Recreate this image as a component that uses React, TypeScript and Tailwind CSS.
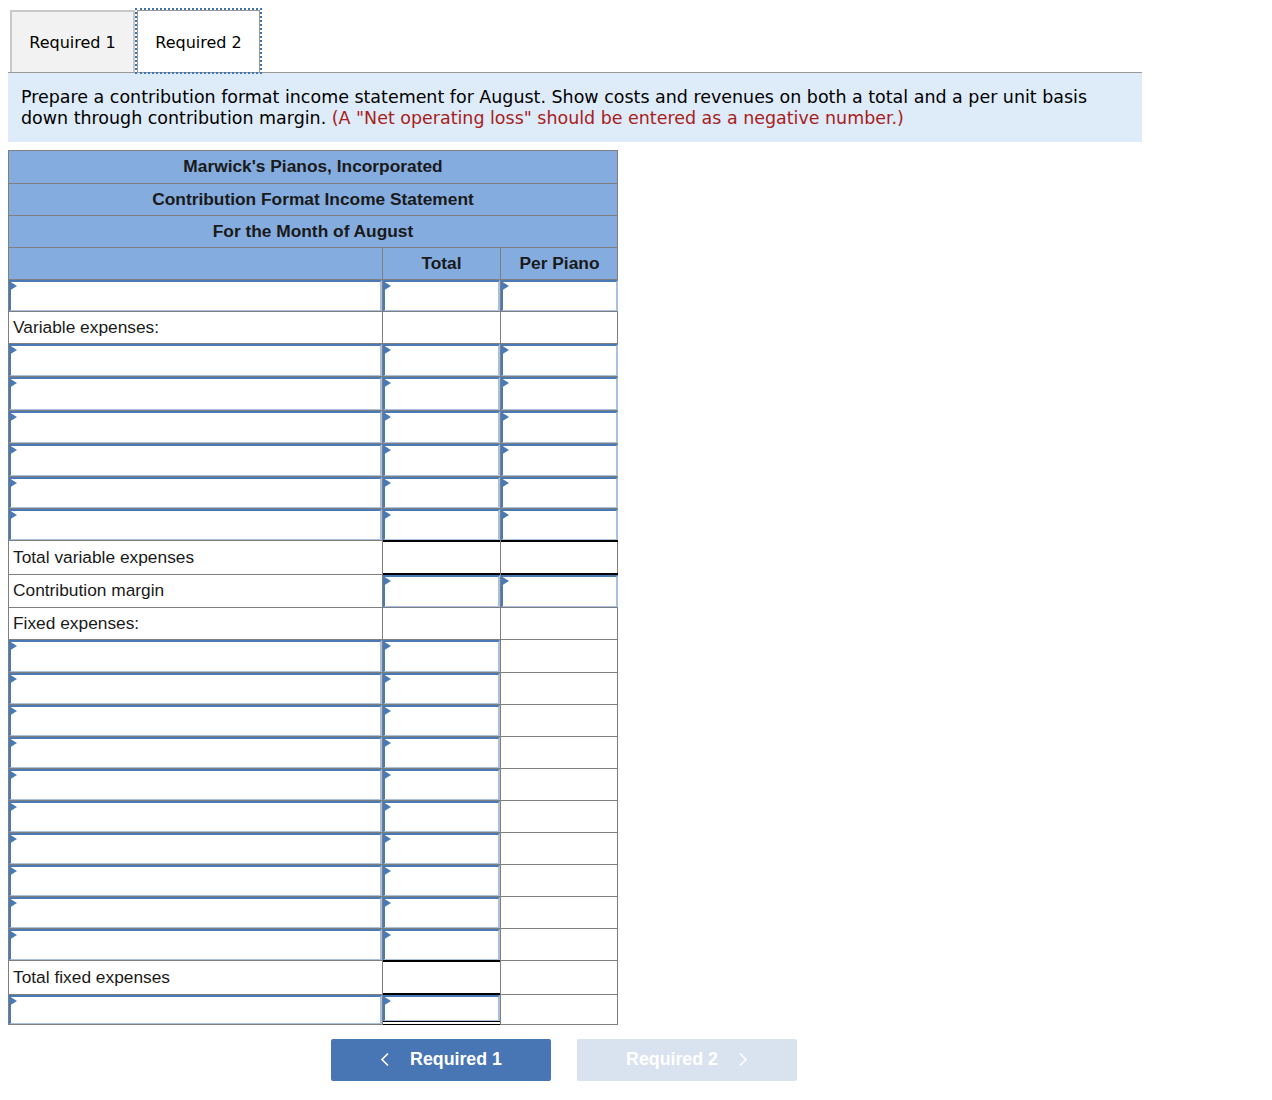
type CellKind = 'blank' | 'input' | 'sum' | 'double';

interface Row {
  height: number;
  label?: string;
  labelInput?: boolean;
  total: CellKind;
  perUnit: CellKind;
}

const inputRow = (height: number, perUnit: CellKind = 'input'): Row => ({
  height,
  labelInput: true,
  total: 'input',
  perUnit,
});

const rows: Row[] = [
  inputRow(32),
  { height: 32, label: 'Variable expenses:', total: 'blank', perUnit: 'blank' },
  inputRow(33),
  inputRow(34),
  inputRow(33),
  inputRow(33),
  inputRow(32),
  inputRow(32),
  { height: 34, label: 'Total variable expenses', total: 'sum', perUnit: 'sum' },
  { height: 33, label: 'Contribution margin', total: 'input', perUnit: 'input' },
  { height: 32, label: 'Fixed expenses:', total: 'blank', perUnit: 'blank' },
  inputRow(33, 'blank'),
  inputRow(32, 'blank'),
  inputRow(32, 'blank'),
  inputRow(32, 'blank'),
  inputRow(32, 'blank'),
  inputRow(32, 'blank'),
  inputRow(32, 'blank'),
  inputRow(32, 'blank'),
  inputRow(32, 'blank'),
  inputRow(32, 'blank'),
  { height: 34, label: 'Total fixed expenses', total: 'sum', perUnit: 'blank' },
  { height: 30, labelInput: true, total: 'double', perUnit: 'blank' },
];

function InputCell() {
  return (
    <div className="relative h-full w-full border-2 border-b border-[#4a7ab5] border-r-[#a9c0de] border-b-[#a9c0de] bg-white">
      <span className="absolute -left-[2px] -top-px h-0 w-0 border-y-[5px] border-l-[8px] border-y-transparent border-l-[#4a7ab5]" />
    </div>
  );
}

function Cell({ kind }: { kind: CellKind }) {
  if (kind === 'blank') return <div className="h-full" />;
  if (kind === 'sum') return <div className="relative z-10 -my-px h-[calc(100%+2px)] border-y-2 border-black" />;
  if (kind === 'double') {
    return (
      <div className="relative z-10 -mb-px flex h-[calc(100%+1px)] flex-col border-b border-black">
        <div className="flex-1">
          <InputCell />
        </div>
        <div className="h-[3px] border-t border-black" />
      </div>
    );
  }
  return <InputCell />;
}

function StatementRow({ row }: { row: Row }) {
  return (
    <div
      className="grid grid-cols-[374px_118px_117px] border-b border-[#7f7f7f]"
      style={{ height: row.height }}
    >
      <div className="border-r border-[#7f7f7f] text-[17.33px] text-[#1a1a1a]">
        {row.labelInput ? <InputCell /> : <div className="flex h-full items-center pl-1">{row.label}</div>}
      </div>
      <div className="border-r border-[#7f7f7f]">
        <Cell kind={row.total} />
      </div>
      <div>
        <Cell kind={row.perUnit} />
      </div>
    </div>
  );
}

export default function App() {
  return (
    <div className="min-h-[1100px] bg-white pl-2 pt-[9px] font-['Liberation_Sans',Arial,sans-serif]">
      <div className="w-[1134px] font-['DejaVu_Sans',Verdana,sans-serif]">
        <div className="flex h-[64px] items-end border-b border-[#999999] pl-[2px] text-[16px] text-black">
          <div className="flex h-[62px] w-[125px] items-center justify-center border-2 border-b-0 border-[#c8c8c8] bg-[#f2f2f2] pt-[2px]">
            Required 1
          </div>
          <div className="relative z-10 ml-[2px] flex h-[62px] w-[123px] items-center justify-center border border-b-0 border-[#9a9a9a] bg-white pt-[2px] outline-2 outline-dotted outline-[#3f73b4]">
            Required 2
          </div>
        </div>
        <div className="h-[69px] bg-[#deebf9] px-[13px] pt-[14px] text-[17.47px] leading-[21px] text-black">
          Prepare a contribution format income statement for August. Show costs and revenues on both a total and a per
          unit basis
          <br />
          down through contribution margin.{' '}
          <span className="text-[#a8201a]">(A "Net operating loss" should be entered as a negative number.)</span>
        </div>
      </div>

      <div className="mt-2 w-[610px] border border-b-0 border-[#7f7f7f]">
        <div className="bg-[#84acdf] text-center text-[17.33px] font-bold leading-[31px] text-[#1a1a1a]">
          <div className="h-[33px] border-b border-[#7f7f7f]">Marwick's Pianos, Incorporated</div>
          <div className="h-[32px] border-b border-[#7f7f7f]">Contribution Format Income Statement</div>
          <div className="h-[32px] border-b border-[#7f7f7f]">For the Month of August</div>
          <div className="grid h-[32px] grid-cols-[374px_118px_117px] border-b border-[#7f7f7f]">
            <div className="border-r border-[#7f7f7f]" />
            <div className="border-r border-[#7f7f7f]">Total</div>
            <div>Per Piano</div>
          </div>
        </div>
        {rows.map((row, i) => (
          <StatementRow key={i} row={row} />
        ))}
      </div>

      <div className="mt-[14px] flex w-[1112px] justify-center gap-[26px] text-[17.8px] font-bold text-white">
        <button className="flex h-[42px] w-[220px] items-center justify-center gap-[21px] rounded-[2px] bg-[#4876b4] pb-[2px]">
          <svg width="9" height="15" viewBox="0 0 9 15" fill="none" stroke="currentColor" strokeWidth="1.6">
            <path d="M8 1.5 L2 7.5 L8 13.5" />
          </svg>
          Required 1
        </button>
        <button className="flex h-[42px] w-[220px] items-center justify-center gap-[21px] rounded-[2px] bg-[#d9e3ef] pb-[2px]">
          Required 2
          <svg width="9" height="15" viewBox="0 0 9 15" fill="none" stroke="currentColor" strokeWidth="1.6">
            <path d="M1 1.5 L7 7.5 L1 13.5" />
          </svg>
        </button>
      </div>
    </div>
  );
}
